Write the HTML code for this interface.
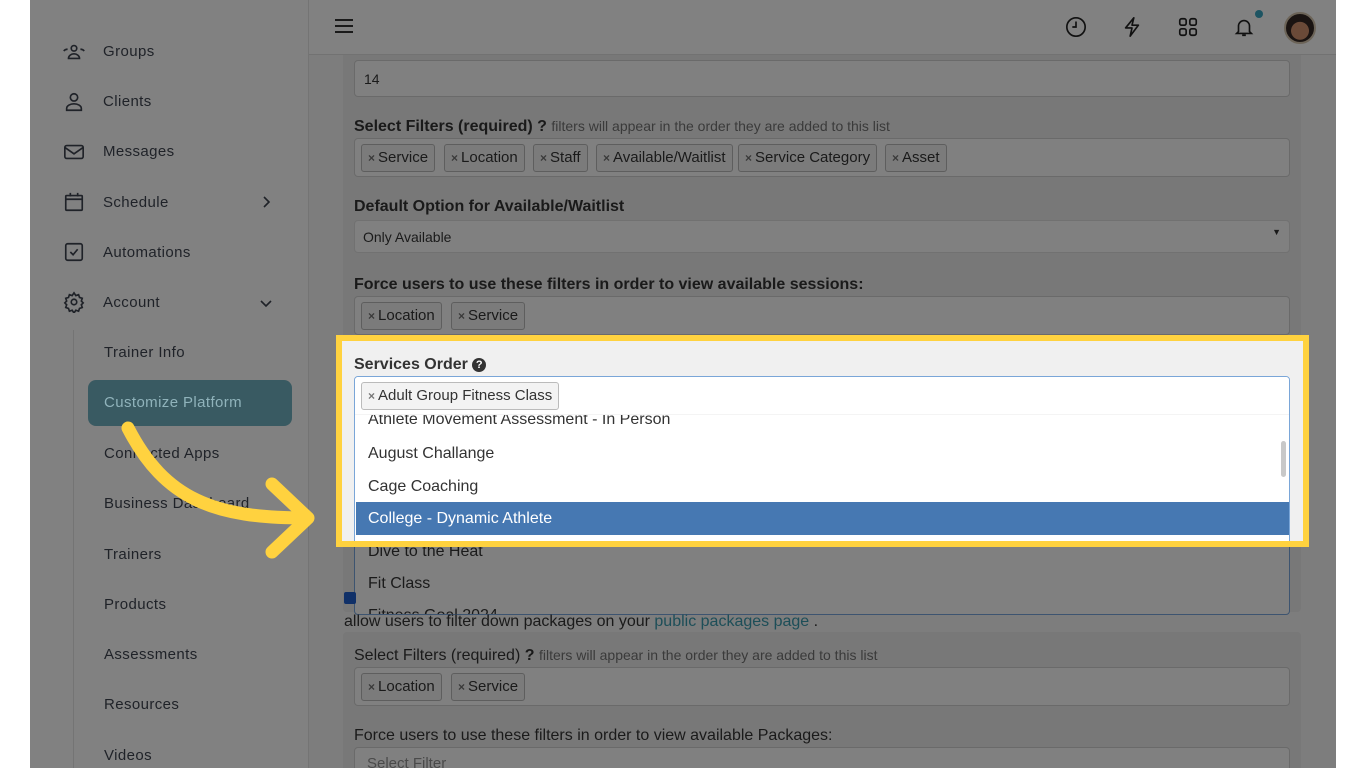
<!DOCTYPE html>
<html><head><meta charset="utf-8"><style>
*{box-sizing:border-box;margin:0;padding:0}
body{width:1366px;height:768px;overflow:hidden;background:#fff;font-family:"Liberation Sans",sans-serif;position:relative}
.abs{position:absolute}
#app{position:absolute;left:30px;top:0;width:1306px;height:768px;background:#7d7d7d;overflow:hidden}
.side{position:absolute;left:0;top:0;width:279px;height:768px;background:#818181;border-right:1px solid #747474}
.si{position:absolute;left:73px;font-size:15px;color:#1f2228;letter-spacing:.4px}
.ic{position:absolute;left:33px;width:22px;height:22px}
.hdr{position:absolute;left:279px;top:0;width:1027px;height:55px;background:#818181;border-bottom:1px solid #727272}
.well{position:absolute;left:313px;width:958px;background:#787878;border-radius:4px}
.lbl{position:absolute;left:324px;font-size:16px;color:#1a1a1a}
.box{position:absolute;left:324px;width:936px;background:#808080;border:1px solid #6a6a6a;border-radius:4px}
.tag{position:absolute;top:5px;height:28px;border:1px solid #5e5e5e;border-radius:3px;background:#7b7b7b;font-size:15px;color:#1a1a1a;line-height:26px;padding:0 6px}
.tag b{font-size:12px;color:#3a3a3a;font-weight:bold;margin-right:3px}
.it{position:absolute;left:1px;width:934px;height:33px;font-size:16px;color:#1a1a1a;line-height:33px;padding-left:12px}
.sel{background:#233c59;color:#7f7f7f}
.top{background:#808080;border-bottom:1px solid #7a7a7a}
.sb{background:#646464}
.hl .box{background:#fff;border-color:#7aa6d8}
.hl .lbl,.hl .it{color:#333}
.hl .tag{background:#f3f3f3;border-color:#bbb;color:#333}
.hl .tag b{color:#777}
.hl .sel{background:#4678b2;color:#fff}
.hl .top{background:#fff;border-bottom-color:#f4f4f4}
.hl .sb{background:#c8c8c8}
.q{display:inline-block;width:14px;height:14px;border-radius:50%;background:#1a1a1a;color:#808080;font-size:11px;line-height:14px;text-align:center;vertical-align:1px}
.hl .q{background:#333;color:#fff}
</style></head><body>
<div id="app">
 <div class="side">
  <svg class="ic" style="top:41px" viewBox="0 0 24 24" fill="none" stroke="#1f2228" stroke-width="1.8"><circle cx="12" cy="8" r="3"/><path d="M6 19c0-3 3-5 6-5s6 2 6 5zM1 11c1-2 3-2 4-2M23 11c-1-2-3-2-4-2"/></svg>
  <div class="si" style="top:43px">Groups</div>
  <svg class="ic" style="top:91px" viewBox="0 0 24 24" fill="none" stroke="#1f2228" stroke-width="1.8"><circle cx="12" cy="7" r="4"/><path d="M4 21v-2c0-3 4-5 8-5s8 2 8 5v2z"/></svg>
  <div class="si" style="top:93px">Clients</div>
  <svg class="ic" style="top:141px" viewBox="0 0 24 24" fill="none" stroke="#1f2228" stroke-width="1.8"><rect x="2" y="5" width="20" height="14" rx="2"/><path d="M2 7l10 7 10-7"/></svg>
  <div class="si" style="top:143px">Messages</div>
  <svg class="ic" style="top:191px" viewBox="0 0 24 24" fill="none" stroke="#1f2228" stroke-width="1.8"><rect x="3" y="5" width="18" height="16" rx="1"/><path d="M3 9h18M8 2v4M16 2v4"/></svg>
  <div class="si" style="top:194px">Schedule</div>
  <svg class="abs" style="left:230px;top:196px" width="12" height="12" viewBox="0 0 12 12" fill="none" stroke="#1f2228" stroke-width="1.6"><path d="M4 1l5 5-5 5"/></svg>
  <svg class="ic" style="top:241px" viewBox="0 0 24 24" fill="none" stroke="#1f2228" stroke-width="1.8"><rect x="3" y="3" width="18" height="18" rx="2"/><path d="M8 12l3 3 5-6"/></svg>
  <div class="si" style="top:244px">Automations</div>
  <svg class="ic" style="top:291px" viewBox="0 0 24 24" fill="none" stroke="#1f2228" stroke-width="1.8"><circle cx="12" cy="12" r="3"/><path d="M12 2l2 3 3-1 1 3 3 1-1 3 2 2-2 2 1 3-3 1-1 3-3-1-2 3-2-3-3 1-1-3-3-1 1-3-2-2 2-2-1-3 3-1 1-3 3 1z"/></svg>
  <div class="si" style="top:294px">Account</div>
  <svg class="abs" style="left:230px;top:297px" width="12" height="12" viewBox="0 0 12 12" fill="none" stroke="#1f2228" stroke-width="1.6"><path d="M1 4l5 5 5-5"/></svg>
  <div class="abs" style="left:43px;top:330px;width:1px;height:438px;background:#747474"></div>
  <div class="si" style="left:74px;top:344px">Trainer Info</div>
  <div class="abs" style="left:58px;top:380px;width:204px;height:46px;background:#395a62;border-radius:8px"></div>
  <div class="si" style="left:74px;top:394px;color:#90b3bb">Customize Platform</div>
  <div class="si" style="left:74px;top:445px">Connected Apps</div>
  <div class="si" style="left:74px;top:495px">Business Dashboard</div>
  <div class="si" style="left:74px;top:546px">Trainers</div>
  <div class="si" style="left:74px;top:596px">Products</div>
  <div class="si" style="left:74px;top:646px">Assessments</div>
  <div class="si" style="left:74px;top:696px">Resources</div>
  <div class="si" style="left:74px;top:747px">Videos</div>
 </div>
 <div class="well" style="top:0;height:612px"></div>
 <div class="well" style="top:632px;height:150px"></div>
 <div class="box" style="top:60px;height:37px;font-size:14px;color:#1a1a1a;padding:10px 9px">14</div>
 <div class="lbl" style="top:118px"><b>Select Filters (required) ?</b> <span style="font-size:14px;color:#3a3a3a">filters will appear in the order they are added to this list</span></div>
 <div class="box" style="top:138px;height:39px">
  <div class="tag" style="left:6px"><b>×</b>Service</div>
  <div class="tag" style="left:89px"><b>×</b>Location</div>
  <div class="tag" style="left:178px"><b>×</b>Staff</div>
  <div class="tag" style="left:241px"><b>×</b>Available/Waitlist</div>
  <div class="tag" style="left:383px"><b>×</b>Service Category</div>
  <div class="tag" style="left:530px"><b>×</b>Asset</div>
 </div>
 <div class="lbl" style="top:198px;font-weight:bold">Default Option for Available/Waitlist</div>
 <div class="box" style="top:220px;height:33px;font-size:14px;color:#1a1a1a;padding:8px 8px;border-color:#717171">Only Available<span style="position:absolute;right:8px;top:6px;font-size:9px">▼</span></div>
 <div class="lbl" style="top:276px;font-weight:bold">Force users to use these filters in order to view available sessions:</div>
 <div class="box" style="top:296px;height:39px">
  <div class="tag" style="left:6px"><b>×</b>Location</div>
  <div class="tag" style="left:96px"><b>×</b>Service</div>
 </div>
 <div class="lbl" style="top:356px;font-weight:bold">Services Order <span class="q">?</span></div>
 <div class="box" style="top:376px;height:239px;border-color:#3d5470;overflow:hidden">
  <div class="it" style="top:27px;line-height:32px">Athlete Movement Assessment - In Person</div>
  <div class="it" style="top:60px">August Challange</div>
  <div class="it" style="top:93px">Cage Coaching</div>
  <div class="it sel" style="top:125px">College - Dynamic Athlete</div>
  <div class="it" style="top:158px">Dive to the Heat</div>
  <div class="it" style="top:190px">Fit Class</div>
  <div class="it" style="top:222px">Fitness Goal 2024</div>
  <div class="abs top" style="left:0;top:0;width:934px;height:38px"></div>
  <div class="tag" style="left:6px;top:5px"><b>×</b>Adult Group Fitness Class</div>
  <div class="abs sb" style="left:926px;top:64px;width:5px;height:36px;border-radius:3px"></div>
 </div>
 <div class="abs" style="left:314px;top:592px;width:12px;height:12px;background:#103068;border-radius:2px"></div>
 <div class="abs" style="left:314px;top:613px;font-size:16px;color:#1a1a1a">allow users to filter down packages on your <span style="color:#1d4e58">public packages page</span> .</div>
 <div class="lbl" style="top:647px">Select Filters (required) <b>?</b> <span style="font-size:14px;color:#3a3a3a">filters will appear in the order they are added to this list</span></div>
 <div class="box" style="top:667px;height:39px">
  <div class="tag" style="left:6px"><b>×</b>Location</div>
  <div class="tag" style="left:96px"><b>×</b>Service</div>
 </div>
 <div class="lbl" style="top:727px">Force users to use these filters in order to view available Packages:</div>
 <div class="box" style="top:747px;height:40px;font-size:15px;color:#4a4a4a;padding:7px 12px">Select Filter</div>
 <div class="hdr">
  <div class="abs" style="left:26px;top:19px;width:18px;height:2px;background:#1a1a1a;box-shadow:0 6px 0 #1a1a1a,0 12px 0 #1a1a1a"></div>
  <svg class="abs" style="left:756px;top:16px" width="22" height="22" viewBox="0 0 24 24" fill="none" stroke="#111" stroke-width="1.8"><circle cx="12" cy="12" r="10"/><path d="M12 6v6h-4"/></svg>
  <svg class="abs" style="left:812px;top:16px" width="22" height="22" viewBox="0 0 24 24" fill="none" stroke="#111" stroke-width="1.8" stroke-linejoin="round"><path d="M14 2L5 13h7l-2 9 9-12h-7z"/></svg>
  <svg class="abs" style="left:868px;top:16px" width="22" height="22" viewBox="0 0 24 24" fill="none" stroke="#111" stroke-width="1.8"><rect x="3" y="3" width="7" height="7" rx="2"/><rect x="14" y="3" width="7" height="7" rx="2"/><rect x="3" y="14" width="7" height="7" rx="2"/><rect x="14" y="14" width="7" height="7" rx="2"/></svg>
  <svg class="abs" style="left:924px;top:15px" width="22" height="24" viewBox="0 0 24 24" fill="none" stroke="#111" stroke-width="1.8"><path d="M6 17V11a6 6 0 0112 0v6l2 2H4zM10 21h4"/></svg>
  <div class="abs" style="left:946px;top:10px;width:8px;height:8px;border-radius:50%;background:#1d5462"></div>
  <div class="abs" style="left:975px;top:12px;width:32px;height:32px;border-radius:50%;background:radial-gradient(circle at 50% 60%,#6a4a38 0 40%,#1a1412 42%);border:2px solid #6c6458"></div>
 </div>
</div>
<div class="abs" style="left:336px;top:335px;width:973px;height:212px;border:6px solid #ffd23f"></div>
<div class="abs hl" style="left:342px;top:341px;width:961px;height:200px;overflow:hidden;background:#f0f0f0">
 <div style="position:absolute;left:-312px;top:-341px;width:1306px;height:768px">
  <div class="lbl" style="top:356px;font-weight:bold">Services Order <span class="q">?</span></div>
  <div class="box" style="top:376px;height:239px;overflow:hidden">
   <div class="it" style="top:27px;line-height:32px">Athlete Movement Assessment - In Person</div>
   <div class="it" style="top:60px">August Challange</div>
   <div class="it" style="top:93px">Cage Coaching</div>
   <div class="it sel" style="top:125px">College - Dynamic Athlete</div>
   <div class="it" style="top:158px">Dive to the Heat</div>
   <div class="abs top" style="left:0;top:0;width:934px;height:38px"></div>
   <div class="tag" style="left:6px;top:5px"><b>×</b>Adult Group Fitness Class</div>
   <div class="abs sb" style="left:926px;top:64px;width:5px;height:36px;border-radius:3px"></div>
  </div>
 </div>
</div>
<svg class="abs" style="left:0;top:0" width="1366" height="768" fill="none" stroke="#ffd23f" stroke-width="13" stroke-linecap="round" stroke-linejoin="round"><path d="M128 428C165 500 215 518 305 518"/><path d="M272 484L308 518L272 552"/></svg>
</body></html>
